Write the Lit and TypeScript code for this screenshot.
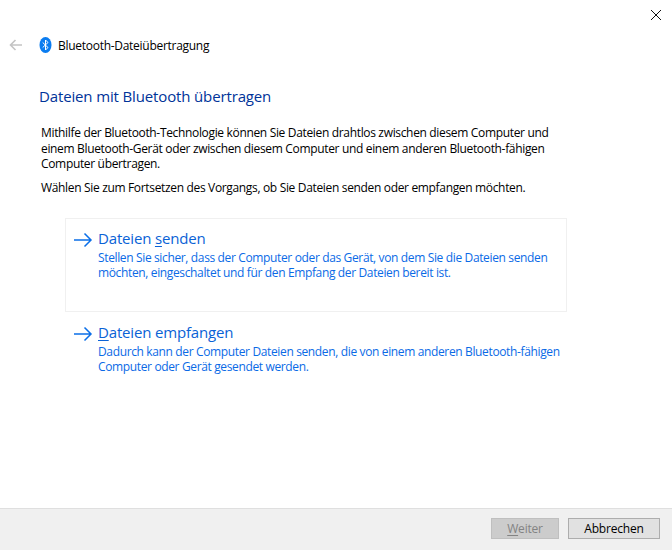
import { LitElement, html, css } from "lit";
import { customElement } from "lit/decorators.js";

const arrow = html`<svg class="arrow" width="20" height="16" viewBox="0 0 20 16" fill="none" stroke="#0b6fe8" stroke-width="1.5"><path d="M1 8h17M11.500 1.500 18 8l-6.500 6.500"/></svg>`;

@customElement("app-root")
export class AppRoot extends LitElement {
  static styles = css`
    :host { display: flex; flex-direction: column; width: 672px; height: 550px; background: #fff; font-family: "Open Sans", "Noto Sans", sans-serif; font-size: 12px; color: #000; overflow: hidden; }
    .top { height: 30px; display: flex; justify-content: flex-end; padding: 9px 10px 0 0; box-sizing: border-box; }
    .header { height: 30px; display: flex; align-items: center; padding-left: 9px; box-sizing: border-box; }
    .back { margin-right: 17px; }
    .bt { margin-right: 6px; }
    .apptitle { letter-spacing: -0.28px; }
    .main { flex: 1; padding: 21px 0 0 39px; }
    h1 { margin: 0 0 14px; font-weight: 400; font-size: 15px; line-height: 30px; color: #003399; letter-spacing: -0.14px; }
    .intro { margin: 0 0 8px 2px; line-height: 15.5px; width: 525px; letter-spacing: -0.335px; }
    .links { margin: 23px 0 0 26px; width: 502px; display: flex; flex-direction: column; }
    .link { display: grid; grid-template-columns: 25px 1fr; box-sizing: border-box; padding: 8px 0 0 7px; color: #0066dd; border: 1px solid transparent; }
    .link.first { height: 94px; border-color: #f0f0f0; }
    .link.second { height: 80px; }
    .arrow { margin-top: 5px; }
    .ltitle { font-size: 15px; line-height: 22px; letter-spacing: -0.17px; color: #0a62d6; }
    .ldesc { line-height: 15px; letter-spacing: -0.36px; color: #0a6ae6; margin-top: 1px; white-space: nowrap; }
    u { text-underline-offset: 2px; }
    .footer { height: 42px; box-sizing: border-box; background: #f0f0f0; border-top: 1px solid #dfdfdf; display: flex; justify-content: flex-end; align-items: flex-start; gap: 9px; padding: 9px 12px 0 0; }
    .btn { box-sizing: border-box; height: 21px; font: inherit; font-size: 12px; padding: 0; line-height: 17px; letter-spacing: -0.2px; border: 1px solid #adadad; background: #e1e1e1; color: #000; }
    .btn.next { width: 68px; background: #cccccc; border-color: #bfbfbf; color: #838383; }
    .btn.cancel { width: 92px; }
  `;
  render() {
    return html`
      <div class="top">
        <svg width="12" height="12" viewBox="0 0 12 12" stroke="#111" stroke-width="1" fill="none"><path d="M1 1l10 10M11 1 1 11"/></svg>
      </div>
      <div class="header">
        <svg class="back" width="13" height="12" viewBox="0 0 13 12" fill="none" stroke="#c4c4c4" stroke-width="1.6"><path d="M13 6H1.500M6.500 1 1.500 6l5 5"/></svg>
        <svg class="bt" width="13" height="16" viewBox="0 0 13 16"><ellipse cx="6.500" cy="8" rx="6" ry="8" fill="#0a7cf0"/><path d="M3.700 5.500 9 10.500 6.500 13V3L9 5.500 3.700 10.500" fill="none" stroke="#fff" stroke-width="1"/></svg>
        <span class="apptitle">Bluetooth-Dateiübertragung</span>
      </div>
      <div class="main">
        <h1>Dateien mit Bluetooth übertragen</h1>
        <p class="intro">Mithilfe der Bluetooth-Technologie können Sie Dateien drahtlos zwischen diesem Computer und einem Bluetooth-Gerät oder zwischen diesem Computer und einem anderen Bluetooth-fähigen Computer übertragen.</p>
        <p class="intro">Wählen Sie zum Fortsetzen des Vorgangs, ob Sie Dateien senden oder empfangen möchten.</p>
        <div class="links">
          <div class="link first">
            ${arrow}
            <div>
              <div class="ltitle">Dateien <u>s</u>enden</div>
              <div class="ldesc">Stellen Sie sicher, dass der Computer oder das Gerät, von dem Sie die Dateien senden<br />möchten, eingeschaltet und für den Empfang der Dateien bereit ist.</div>
            </div>
          </div>
          <div class="link second">
            ${arrow}
            <div>
              <div class="ltitle"><u>D</u>ateien empfangen</div>
              <div class="ldesc">Dadurch kann der Computer Dateien senden, die von einem anderen Bluetooth-fähigen<br />Computer oder Gerät gesendet werden.</div>
            </div>
          </div>
        </div>
      </div>
      <div class="footer">
        <button class="btn next" disabled><u>W</u>eiter</button>
        <button class="btn cancel">Abbrechen</button>
      </div>
    `;
  }
}
